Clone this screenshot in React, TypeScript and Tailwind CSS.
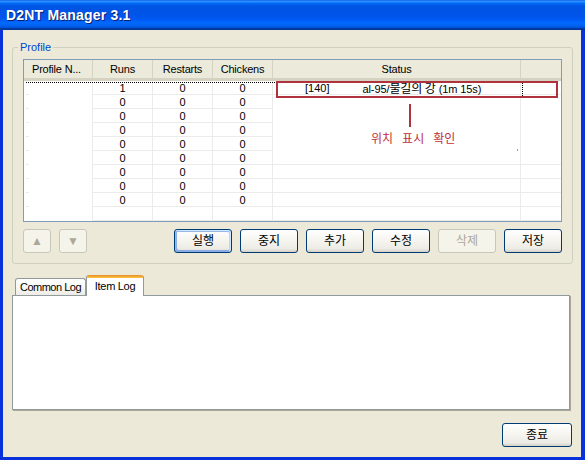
import React from 'react';

const cols = [
  { w: 'w-[69px]', label: 'Profile N...', align: 'justify-start pl-[8px]' },
  { w: 'w-[60px]', label: 'Runs', align: 'justify-center' },
  { w: 'w-[60px]', label: 'Restarts', align: 'justify-center' },
  { w: 'w-[60px]', label: 'Chickens', align: 'justify-center' },
  { w: 'w-[248px]', label: 'Status', align: 'justify-center' },
  { w: 'w-[40px]', label: '', align: 'justify-center' },
];

const rows: (string[] | null)[] = [
  ['1', '0', '0'],
  ['0', '0', '0'],
  ['0', '0', '0'],
  ['0', '0', '0'],
  ['0', '0', '0'],
  ['0', '0', '0'],
  ['0', '0', '0'],
  ['0', '0', '0'],
  ['0', '0', '0'],
  null,
];

const btnBase =
  'h-[24px] rounded-[3px] border flex items-center justify-center text-[12px] leading-none';
const btnNormal =
  'border-[#003c74] bg-[linear-gradient(180deg,#ffffff_0%,#f6f5f0_45%,#ecebe4_85%,#d6d0c5_100%)] text-black';
const btnFocus =
  'shadow-[inset_-1px_1px_#cee7ff,inset_1px_2px_#98b8ea,inset_-2px_2px_#bcd4f6,inset_1px_-1px_#89ade4,inset_2px_-2px_#89ade4]';
const btnDisabled = 'border-[#c9c7ba] bg-[#f5f4ea] text-[#aca899]';

function XpButton({
  label,
  focused,
  disabled,
  className = '',
}: {
  label: string;
  focused?: boolean;
  disabled?: boolean;
  className?: string;
}) {
  return (
    <button
      className={`${btnBase} ${disabled ? btnDisabled : btnNormal} ${focused ? btnFocus : ''} ${className}`}
    >
      {label}
    </button>
  );
}

function ProfileList() {
  return (
    <div className="relative w-[539px] h-[163px] border border-[#7f9db9] bg-white">
      {/* Header */}
      <div className="flex h-[21px] bg-[#ebeadb] border-b-[3px] border-[#d6d2c2]">
        {cols.map((c, i) => (
          <div
            key={i}
            className={`${c.w} flex items-center ${c.align} text-[11px] tracking-[-0.2px] text-black ${
              i < 5 ? 'border-r border-[#d6d3c4]' : ''
            }`}
          >
            {c.label}
          </div>
        ))}
      </div>

      {/* Rows */}
      {rows.map((r, ri) => {
        const hideStatusLine = ri >= 1 && ri <= 4;
        return (
          <div key={ri} className="flex h-[14px]">
            <div className="w-[69px] border-r border-[#ebebeb] flex flex-col justify-end">
              {ri < 9 && <div className="h-px w-[3px] ml-[2px] bg-[#ebebeb]" />}
            </div>
            {[0, 1, 2].map((ci) => (
              <div
                key={ci}
                className="w-[60px] border-r border-b border-[#ebebeb] flex items-center justify-center pt-px text-[11px] leading-none text-black"
              >
                {r ? r[ci] : ''}
              </div>
            ))}
            <div
              className={`w-[248px] border-r flex items-center pt-px text-[11px] leading-none text-black border-[#ebebeb] ${
                hideStatusLine ? '' : 'border-b'
              }`}
            >
              {ri === 0 && (
                <>
                  <span className="ml-[32px]">[140]</span>
                  <span className="ml-[33px] whitespace-nowrap tracking-[-0.1px]">
                    al-95/<span className="font-['Noto_Sans_CJK_KR'] text-[12px]">불길의 강</span> (1m 15s)
                  </span>
                </>
              )}
            </div>
            <div className={`w-[40px] border-[#ebebeb] ${hideStatusLine ? '' : 'border-b'}`} />
          </div>
        );
      })}

      {/* focus rectangle of selected row */}
      <div className="absolute left-[2px] top-[22px] w-[497px] h-[14px] border-t border-r border-dotted border-black" />

      {/* annotation */}
      <div className="absolute left-[252px] top-[21px] w-[282px] h-[17px] border-2 border-[#b0323c]" />
      <div className="absolute left-[385px] top-[44px] w-[2px] h-[23px] bg-[#b0323c]" />
      <div className="absolute left-[347px] top-[72px] flex gap-[9px] text-[12px] leading-[12px] text-[#c0303a] font-['Noto_Sans_CJK_KR']">
        <span>위치</span>
        <span>표시</span>
        <span>확인</span>
      </div>
      <div className="absolute left-[493px] top-[89px] w-px h-[2px] bg-[#9a9a9a]" />
    </div>
  );
}

export default function App() {
  return (
    <div className="w-[585px] h-[460px] flex flex-col bg-[#0831d9] font-['Liberation_Sans','Noto_Sans_CJK_KR',sans-serif] select-none overflow-hidden">
      {/* Title bar */}
      <div className="h-[30px] shrink-0 flex items-center pl-[6px] bg-[linear-gradient(180deg,#0058ee_0%,#3a93ff_4%,#288eff_6%,#127dff_8%,#036ffc_10%,#0262ee_14%,#0057e5_20%,#0054e3_24%,#0055eb_56%,#005bf5_66%,#026afe_76%,#0062ef_86%,#0052d6_92%,#0040ab_94%,#003092_100%)]">
        <span className="text-white font-bold text-[14px] tracking-[0.2px] [text-shadow:1px_1px_0_#0a1f6e]">
          D2NT Manager 3.1
        </span>
      </div>

      {/* Window body */}
      <div className="flex-1 flex flex-col bg-[#ece9d8] ml-[3px] mr-[4px] mb-[3px]">
        {/* Profile group */}
        <div className="relative mt-[17px] ml-[9px] mr-[8px] h-[217px] border border-[#d0d0bf] rounded-[3px] px-[10px] pt-[11px]">
          <span className="absolute left-[5px] top-[-7px] px-[2px] bg-[#ece9d8] text-[11px] leading-[13px] text-[#0046d5]">
            Profile
          </span>
          <ProfileList />
          <div className="mt-[7px] flex justify-between">
            <div className="flex gap-[8px]">
              <button className={`${btnBase} ${btnDisabled} w-[28px] text-[8px]`}>▲</button>
              <button className={`${btnBase} ${btnDisabled} w-[28px] text-[8px]`}>▼</button>
            </div>
            <div className="flex gap-[8px]">
              <XpButton label="실행" focused className="w-[58px]" />
              <XpButton label="중지" className="w-[58px]" />
              <XpButton label="추가" className="w-[58px]" />
              <XpButton label="수정" className="w-[58px]" />
              <XpButton label="삭제" disabled className="w-[58px]" />
              <XpButton label="저장" className="w-[58px]" />
            </div>
          </div>
        </div>

        {/* Tabs */}
        <div className="mt-[11px] ml-[9px] mr-[11px] flex flex-col">
          <div className="h-[20px] flex items-end pl-[3px]">
            <div className="h-[17px] w-[71px] flex items-center justify-center text-[11px] tracking-[-0.5px] leading-none whitespace-nowrap border border-b-0 border-[#919b9c] rounded-t-[3px] bg-[linear-gradient(180deg,#ffffff_0%,#f7f7f3_60%,#ecebe6_100%)]">
              Common Log
            </div>
            <div className="relative z-10 -mb-px h-[21px] w-[58px] flex flex-col border-x border-[#919b9c] rounded-t-[3px] bg-white">
              <div className="h-[3px] rounded-t-[2px] bg-[linear-gradient(180deg,#e68b2c_0%,#ffc73c_100%)]" />
              <div className="flex-1 flex items-center justify-center text-[11px] tracking-[-0.3px] leading-none pb-[2px] whitespace-nowrap">
                Item Log
              </div>
            </div>
          </div>
          <div className="h-[115px] bg-white border border-[#919b9c] shadow-[1px_1px_0_#aca899]" />
        </div>

        {/* Bottom */}
        <div className="mt-[13px] flex justify-end mr-[9px]">
          <XpButton label="종료" className="w-[70px]" />
        </div>
      </div>
    </div>
  );
}
